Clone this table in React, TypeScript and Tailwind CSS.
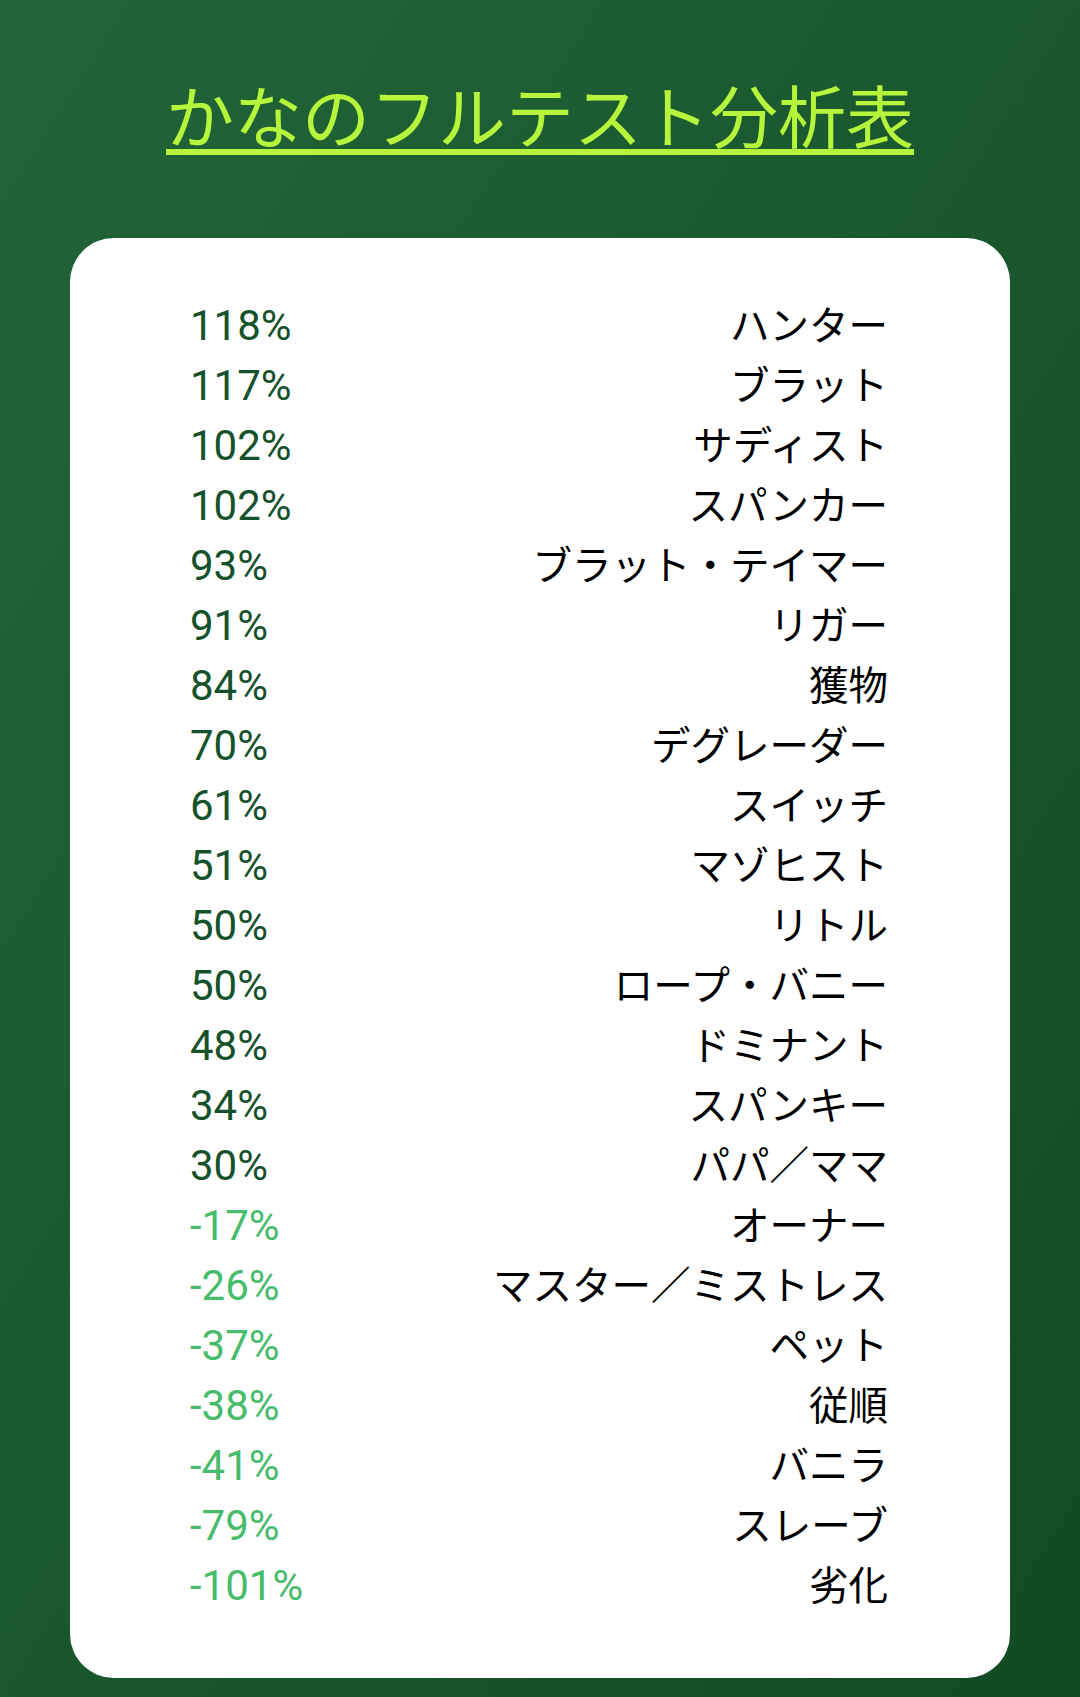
import React from "react";

const rows: [string, string][] = [
  ["118%", "ハンター"],
  ["117%", "ブラット"],
  ["102%", "サディスト"],
  ["102%", "スパンカー"],
  ["93%", "ブラット・テイマー"],
  ["91%", "リガー"],
  ["84%", "獲物"],
  ["70%", "デグレーダー"],
  ["61%", "スイッチ"],
  ["51%", "マゾヒスト"],
  ["50%", "リトル"],
  ["50%", "ロープ・バニー"],
  ["48%", "ドミナント"],
  ["34%", "スパンキー"],
  ["30%", "パパ／ママ"],
  ["-17%", "オーナー"],
  ["-26%", "マスター／ミストレス"],
  ["-37%", "ペット"],
  ["-38%", "従順"],
  ["-41%", "バニラ"],
  ["-79%", "スレーブ"],
  ["-101%", "劣化"],
];

export default function App() {
  return (
    <div className="w-[1080px] h-[1697px] bg-gradient-to-br from-[#226539] to-[#124a23] flex flex-col items-center font-['Noto_Sans_CJK_JP',sans-serif]">
      <div className="h-[238px] w-full flex items-center justify-center pb-[10px]">
        <h1 className="text-[68px] leading-[1.1] text-[#b5f53c] underline decoration-[6px] underline-offset-[6px] font-normal font-['Noto_Sans_CJK_JP',sans-serif]">
          かなのフルテスト分析表
        </h1>
      </div>
      <div className="w-[940px] h-[1440px] bg-white rounded-[44px] pt-[58px] pl-[120px] pr-[122px] flex flex-col">
        {rows.map(([v, n], i) => (
          <div key={i} className="h-[60px] flex items-center justify-between">
            {v.startsWith("-") ? (
              <span className="text-[42px] leading-none text-[#48bb6c] font-['Roboto',sans-serif]">
                {v}
              </span>
            ) : (
              <span className="text-[42px] leading-none text-[#15512a] font-['Roboto',sans-serif]">
                {v}
              </span>
            )}
            <span className="mb-[6px] text-[39.5px] leading-none text-black font-['Noto_Sans_CJK_JP',sans-serif]">
              {n}
            </span>
          </div>
        ))}
      </div>
    </div>
  );
}
